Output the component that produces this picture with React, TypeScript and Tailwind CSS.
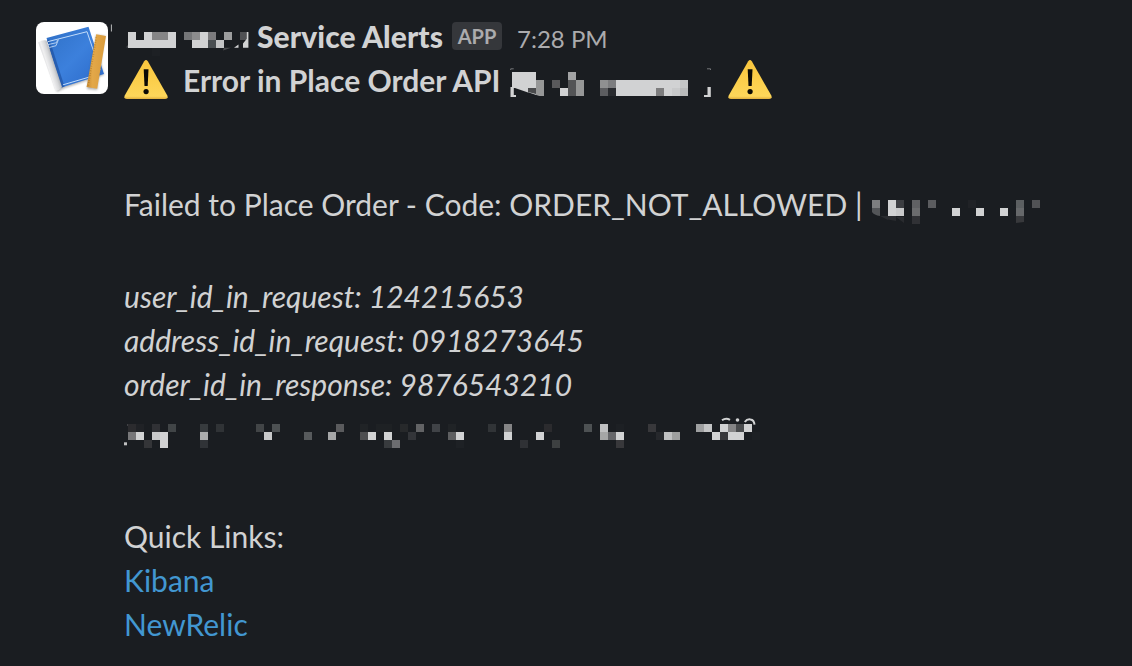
import type { ReactNode } from "react";

type Cell = [x: number, y: number, fill: string, width?: number];

const L = "#d1d2d3";

const senderCells: Cell[] = [
  [128, 32, L], [144, 32, L], [152, 32, "#858586", 16], [168, 32, L], [128, 40, L, 48],
  [184, 32, "#757678"], [192, 32, "#8c8c8d"], [200, 32, L], [208, 32, "#7c7c7e"], [224, 32, "#9c9d9e"], [240, 32, "#505154"],
  [192, 40, L, 16], [208, 40, "#4a4f52"], [216, 40, "#c4c5c6"], [152, 48, "#1d2024"],
];

const titleCells: Cell[] = [
  [512, 72, L, 24], [568, 72, "#a2a3a4"],
  [512, 80, L, 24], [536, 80, "#969797"], [552, 80, "#59595b"], [568, 80, "#535456"], [576, 80, "#969797"],
  [600, 80, "#8f9091"], [608, 80, "#7c7d7f"], [616, 80, L, 64], [680, 80, "#c4c5c6"],
  [528, 88, "#494a4c"], [536, 88, "#969797"], [560, 88, L], [568, 88, "#535456"], [576, 88, "#969797"],
  [600, 88, "#5c5d60"], [608, 88, "#292b2f"], [616, 88, L, 40], [656, 88, "#7d7d7e"], [664, 88, L], [672, 88, "#c8c9ca"], [680, 88, "#b9babb"],
];

const reasonCells: Cell[] = [
  [872, 200, "#7d7e80"], [888, 200, L], [896, 200, "#3c3e42"], [912, 200, "#606164"], [928, 200, "#5b5c5f"], [968, 200, "#202226"],
  [1016, 200, "#5c5f61"], [1032, 200, "#515255"],
  [888, 208, L], [896, 208, "#c8c9ca"], [912, 208, "#6b6c6e"], [952, 208, L], [976, 208, L], [1000, 208, L], [1016, 208, "#66686a"],
  [912, 216, "#303135"],
];

const detailCells: Cell[] = [
  [128, 424, "#2b2b2e"], [136, 424, "#202226"], [152, 424, "#303135"], [168, 424, "#414547"], [200, 424, "#373b3e"], [216, 424, "#303336"],
  [256, 424, "#424547"], [272, 424, "#4d5153"], [336, 424, "#5a5b5d"], [360, 424, "#202326"], [376, 424, "#1e2124", 16], [400, 424, "#27292b"],
  [416, 424, "#626365"], [432, 424, "#404347"], [448, 424, "#202326"], [488, 424, "#313437"], [504, 424, "#858586"], [544, 424, "#2b2b2e"],
  [584, 424, "#4d5153"], [600, 424, "#bfc0c1"], [616, 424, "#1d2024"], [648, 424, "#38383b"], [696, 424, "#9e9fa0"], [704, 424, "#c3c4c5"],
  [720, 424, L], [728, 424, "#858586"], [736, 424, "#494b4d"], [744, 424, L],
  [128, 432, "#777779"], [136, 432, L], [152, 432, "#c8c9ca"], [160, 432, L], [200, 432, "#acadae"], [264, 432, "#c8c9ca"],
  [304, 432, "#575a5c"], [328, 432, "#a5a6a7"], [360, 432, "#4d4e50"], [368, 432, L], [384, 432, L], [408, 432, "#333539"],
  [448, 432, "#5e5f61"], [456, 432, L], [504, 432, L], [536, 432, L], [600, 432, "#a5a6a6"], [608, 432, "#66676a"], [616, 432, L],
  [656, 432, "#26282c"], [664, 432, "#bfc0c1"], [672, 432, "#9e9f9f"], [712, 432, L], [720, 432, "#38383b"], [728, 432, L, 16], [752, 432, "#1d2024"],
  [144, 440, "#343538"], [160, 440, L], [200, 440, "#303337"], [384, 440, "#383b3e"], [392, 440, "#6c6d70"], [456, 440, "#1e2125"],
  [520, 440, "#2f3135"], [552, 440, "#3d4041"], [616, 440, "#38383b"],
];

function Mosaic({ cells, x, y, width, className, children }: {
  cells: Cell[]; x: number; y: number; width: number; className: string; children?: ReactNode;
}) {
  return (
    <svg aria-hidden="true" shapeRendering="crispEdges" viewBox={`${x} ${y} ${width} 44`} className={`h-11 shrink-0 ${className}`}>
      {cells.map(([cx, cy, fill, w = 8]) => (
        <rect key={`${cx}-${cy}`} x={cx} y={cy} width={w} height={8} fill={fill} />
      ))}
      <g shapeRendering="auto">{children}</g>
    </svg>
  );
}

function Warning({ id }: { id: string }) {
  return (
    <svg role="img" aria-label="warning" viewBox="0 -2 44 44" className="h-11 w-11 shrink-0">
      <defs>
        <linearGradient id={id} x1="0" y1="0" x2="0" y2="1">
          <stop offset="0" stopColor="#f9c63e" />
          <stop offset="0.55" stopColor="#fbcf4c" />
          <stop offset="0.93" stopColor="#fdd65a" />
          <stop offset="1" stopColor="#e0ae3c" />
        </linearGradient>
      </defs>
      <path d="M20.2 1.2Q22-1 23.8 1.2L43.3 35.5Q44.6 39 41.2 39H2.8Q-.6 39 .7 35.5Z" fill={`url(#${id})`} />
      <path d="M19.7 9.2h4.8l-.8 16.8h-3.2z" fill="#0b0a06" />
      <circle cx="22.1" cy="31.6" r="2.6" fill="#0b0a06" />
    </svg>
  );
}

function Avatar() {
  return (
    <svg role="img" aria-label="Service Alerts" viewBox="36 22 76 72" className="h-[72px] w-[76px] shrink-0">
      <defs>
        <linearGradient id="roll" gradientUnits="userSpaceOnUse" x1="45" y1="68" x2="56" y2="64.5">
          <stop offset="0" stopColor="#d4d4d7" />
          <stop offset="0.3" stopColor="#f0f0f1" />
          <stop offset="0.65" stopColor="#d6d7d9" />
          <stop offset="1" stopColor="#a3a6ac" />
        </linearGradient>
        <linearGradient id="blueprint" x1="0" y1="0" x2="1" y2="1">
          <stop offset="0" stopColor="#2f70c6" />
          <stop offset="0.5" stopColor="#3c80dc" />
          <stop offset="1" stopColor="#2a68c8" />
        </linearGradient>
        <linearGradient id="ruler" x1="0" y1="0" x2="1" y2="0">
          <stop offset="0" stopColor="#c98b32" />
          <stop offset="0.3" stopColor="#e3a849" />
          <stop offset="1" stopColor="#d99b3c" />
        </linearGradient>
        <filter id="soft" x="-20%" y="-20%" width="140%" height="140%"><feGaussianBlur stdDeviation="1.3" /></filter>
      </defs>
      <rect x="36" y="22" width="72" height="72" rx="8" fill="#fff" />
      <path d="M42 46 57 92 65 88 104 75 100 60z" fill="#777" opacity=".55" filter="url(#soft)" />
      <path d="M46.5 38 88.5 26.7 104 74 61.5 87.5z" fill="url(#blueprint)" />
      <path d="M47 40 49.5 39.5 64.5 86.5 61 88z" fill="#1d4f9d" opacity=".65" />
      <path d="M48 41.6 87 31.7 100 70M63 84.8 98 74.5" fill="none" stroke="#c2dcfa" strokeWidth="1" />
      <path d="M47.5 44.7 56.5 42.7 57.5 39.8M49.2 47.5 56 45.7 58.5 39.4" fill="none" stroke="#bcd6f5" strokeWidth=".9" />
      <path d="M38.2 42.5Q42 39.5 46.5 40.5L62 87Q60 90.5 55.5 90.8z" fill="url(#roll)" />
      <path d="M96 35 104.8 36 97.2 90 87 89z" fill="#555" opacity=".45" filter="url(#soft)" />
      <path d="M96.2 34.2 106 36 97.2 88.8 86.6 87z" fill="url(#ruler)" />
      <path d="M96.2 37.5 88.3 85.5" stroke="#9a6a20" strokeWidth="1.6" strokeDasharray=".5 1.9" opacity=".8" />
      <path d="M111.4 24.5v7" stroke="#b9babb" strokeWidth="1" />
    </svg>
  );
}

export default function App() {
  return (
    <main className="flex h-[666px] w-[1132px] gap-3 overflow-hidden bg-[#1a1d21] pl-9 font-['Lato',sans-serif] text-[30px] leading-[44px] text-[#d1d2d3]">
      <div className="pt-[22px]"><Avatar /></div>
      <article className="flex flex-col pt-3.5 whitespace-nowrap">
        <header className="flex h-11 items-center">
          <Mosaic cells={senderCells} x={124} y={14} width={132} className="w-[132px]">
            <path d="M126 47.2 128 45v2.8zM223 50.5l8-2.7h-7z" fill="#4a4b4e" />
            <path d="M234 47.8l4.5-3.3v3.3zM243 47.8v-4.2l4-5v9.2zM246.8 32h1.6v15.8h-1.6z" fill={L} />
          </Mosaic>
          <span className="w-[196px] pl-px font-black tracking-[0.1px]">Service Alerts</span>
          <span className="flex h-7 w-[50px] items-center justify-center rounded bg-[#35373b] text-[20px] leading-7 font-bold text-[#ababad]">APP</span>
          <time className="ml-[15px] pt-1.5 text-2xl text-[#ababad]">7:28 PM</time>
        </header>
        <h1 className="flex h-11 items-center font-bold">
          <Warning id="warning-left" />
          <span className="ml-[15px] w-[323px]">Error in Place Order API</span>
          <Mosaic cells={titleCells} x={506} y={58} width={208} className="w-[208px]">
            <path d="M512 88v8h-1.5V88M512 87h1.8v8H516v2h-5.5V87zM515 88h13v4.5zM528 92l8 2v2h-8zM704 95h3.5v-8h3.3v10H704z" fill={L} />
            <path d="M510.7 70v-1.2h3M707 68.8h3.5V70" fill="none" stroke="#747578" />
            <path d="M528 92.3 540 96.2h-12z" fill="#1a1d21" />
          </Mosaic>
          <span className="ml-3.5 flex"><Warning id="warning-right" /></span>
        </h1>
        <p className="mt-20 flex h-11 items-center">
          <span className="w-[744px]">Failed to Place Order - Code: ORDER_NOT_ALLOWED |</span>
          <Mosaic cells={reasonCells} x={868} y={182} width={176} className="w-[176px]">
            <path d="M872 208h8v8q-6-1-8-4z" fill="#535558" />
            <path d="M880 216h8v4zM888 216h8v5l-8-1.5zM896 217h8v6z" fill="#292b2f" />
            <path d="M1016 216h8v6l-8 1z" fill="#38393c" />
          </Mosaic>
        </p>
        <section className="mt-12 flex flex-col italic">
          <p>user_id_in_request: 124215653</p>
          <p>address_id_in_request: 0918273645</p>
          <p>order_id_in_response: 9876543210</p>
          <Mosaic cells={detailCells} x={124} y={406} width={648} className="w-[648px]">
            <path d="M124 442.3h3v3h-3z" fill="#bfc0c1" />
            <path d="M127 424.5h1v1h-1z" fill="#66676a" />
            <path d="M722 420.3q4-3 8-.4M744.8 422q2.2-3.2 5.7-2.6 3.6.5 4 5.2" fill="none" stroke={L} strokeWidth="2" />
            <circle cx="737.5" cy="420" r="1.8" fill={L} />
          </Mosaic>
        </section>
        <nav className="mt-16 flex flex-col">
          <p>Quick Links:</p>
          <a href="#kibana" className="text-[#4297d1]">Kibana</a>
          <a href="#newrelic" className="text-[#4297d1]">NewRelic</a>
        </nav>
      </article>
    </main>
  );
}
